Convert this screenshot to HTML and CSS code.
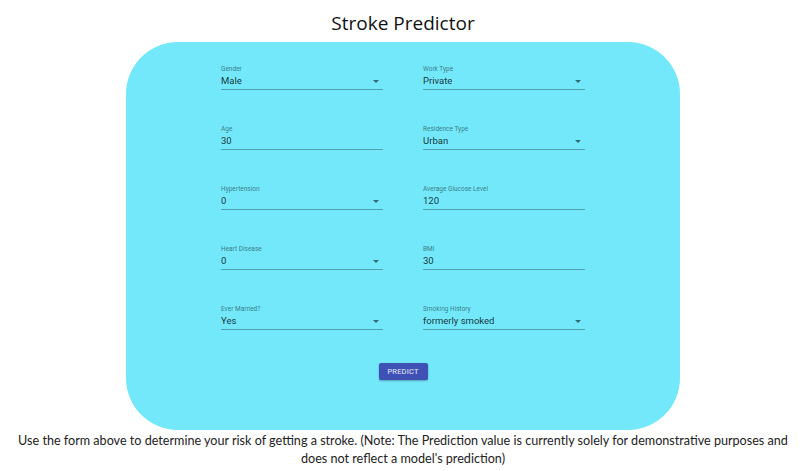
FILE: index.html
```html
<!DOCTYPE html>
<html lang="en">
<head>
    <meta charset="UTF-8">
    <meta name="viewport" content="width=device-width, initial-scale=1.0">
    <title>Stroke Predictor</title>
    <link rel="stylesheet" href="styles.css">
</head>
<body>

<h1 class="title">Stroke Predictor</h1>

<div class="panel">
    <div class="form-grid">
        <div class="field select">
            <label>Gender</label>
            <div class="value">Male</div>
        </div>
        <div class="field select">
            <label>Work Type</label>
            <div class="value">Private</div>
        </div>

        <div class="field">
            <label>Age</label>
            <div class="value">30</div>
        </div>
        <div class="field select">
            <label>Residence Type</label>
            <div class="value">Urban</div>
        </div>

        <div class="field select">
            <label>Hypertension</label>
            <div class="value">0</div>
        </div>
        <div class="field">
            <label>Average Glucose Level</label>
            <div class="value">120</div>
        </div>

        <div class="field select">
            <label>Heart Disease</label>
            <div class="value">0</div>
        </div>
        <div class="field">
            <label>BMI</label>
            <div class="value">30</div>
        </div>

        <div class="field select">
            <label>Ever Married?</label>
            <div class="value">Yes</div>
        </div>
        <div class="field select">
            <label>Smoking History</label>
            <div class="value">formerly smoked</div>
        </div>
    </div>

    <div class="actions">
        <button class="predict-button">Predict</button>
    </div>
</div>

<p class="note">Use the form above to determine your risk of getting a stroke. (Note: The Prediction value is currently solely for demonstrative purposes and does not reflect a model's prediction)</p>

</body>
</html>
```

FILE: styles.css
```css
body {
    font-family: 'Open Sans', 'Noto Sans', sans-serif;
    margin: 0;
    background-color: white;
    color: #1d1d1f;
}

.title {
    margin: 0;
    padding-top: 9px;
    height: 33px;
    line-height: 28px;
    font-size: 19px;
    font-weight: 400;
    text-align: center;
    color: #111;
}

.panel {
    width: 554px;
    height: 388px;
    margin: 0 auto;
    box-sizing: border-box;
    padding-top: 23px;
    background-color: #72e8fa;
    border-radius: 52px;
}

.form-grid {
    width: 364px;
    margin: 0 auto;
    display: grid;
    grid-template-columns: 162px 162px;
    column-gap: 40px;
    row-gap: 35px;
}

.field {
    position: relative;
    font-family: Roboto, 'Liberation Sans', sans-serif;
    border-bottom: 1px solid rgba(0, 0, 0, 0.3);
    height: 24px;
}

.field label {
    display: block;
    height: 9px;
    line-height: 9px;
    font-size: 6.5px;
    color: rgba(0, 0, 0, 0.5);
}

.field .value {
    height: 14px;
    line-height: 14px;
    font-size: 9.5px;
    color: rgba(0, 0, 0, 0.8);
}

/* dropdown arrow for the select fields */
.field.select::after {
    content: '';
    position: absolute;
    right: 4px;
    top: 15px;
    border-left: 3px solid transparent;
    border-right: 3px solid transparent;
    border-top: 3px solid rgba(0, 0, 0, 0.55);
}

.actions {
    margin-top: 27px;
    text-align: center;
}

.predict-button {
    width: 49px;
    height: 17px;
    padding: 0;
    border: none;
    border-radius: 2px;
    background-color: #3f51b5;
    color: #e8eaf6;
    font-family: Roboto, 'Liberation Sans', sans-serif;
    font-size: 7.5px;
    font-weight: 400;
    letter-spacing: 0.2px;
    text-transform: uppercase;
    box-shadow: 0 1px 2px rgba(0, 0, 0, 0.3);
}

.note {
    margin: 2px auto 0;
    width: 776px;
    text-align: center;
    font-family: Lato, 'Open Sans', sans-serif;
    font-size: 12.6px;
    line-height: 18px;
    color: #222;
}
```
